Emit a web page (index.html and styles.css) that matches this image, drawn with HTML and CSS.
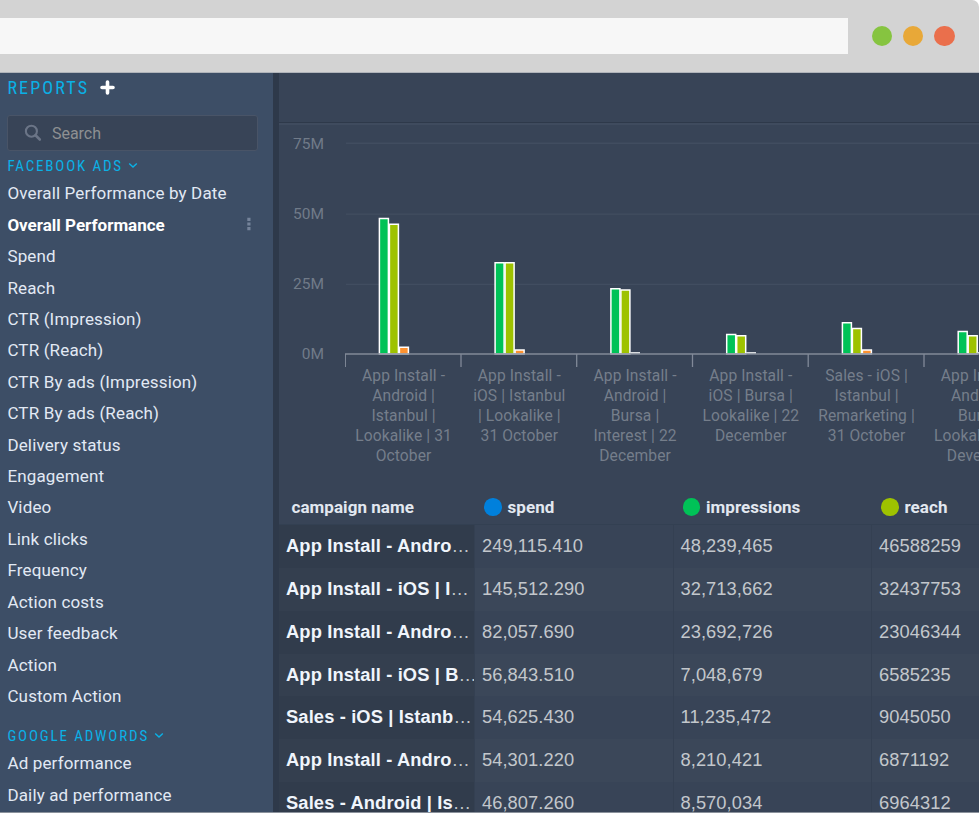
FILE: index.html
```html
<!DOCTYPE html>
<html lang="en">
<head>
<meta charset="utf-8">
<title>Reports</title>
<link rel="stylesheet" href="styles.css">
</head>
<body>
<div class="window">
  <header class="chrome">
    <div class="address"></div>
    <div class="lights"><i class="light green"></i><i class="light amber"></i><i class="light red"></i></div>
  </header>
  <div class="body">
    <aside class="sidebar">
      <h1 class="title"><span>REPORTS</span><svg width="15" height="15" viewBox="0 0 15 15"><path d="M7.5 2v11M2 7.5h11" stroke="#fff" stroke-width="3.6" stroke-linecap="round"/></svg></h1>
      <div class="search">
        <svg width="18" height="18" viewBox="0 0 18 18" fill="none" stroke="#6b7587"><circle cx="7.4" cy="7.2" r="5.5" stroke-width="2.1"/><path d="M11.5 11.3l4.3 4.2" stroke-width="2.6" stroke-linecap="round"/></svg>
        <span>Search</span>
      </div>
      <h2 class="group fb"><span>FACEBOOK ADS</span><svg width="10" height="7" viewBox="0 0 10 7"><path d="M1.2 1.4L5 5.1l3.8-3.7" fill="none" stroke="#0ab1e6" stroke-width="1.4"/></svg></h2>
      <ul class="links">
        <li>Overall Performance by Date</li>
        <li class="active"><span>Overall Performance</span><svg class="more" width="4" height="14" viewBox="0 0 4 14" fill="#75839a"><path d="M.3.8h3.2V4H.3zM.3 5.4h3.2v3.2H.3zM.3 10h3.2v3.2H.3z"/></svg></li>
        <li>Spend</li>
        <li>Reach</li>
        <li>CTR (Impression)</li>
        <li>CTR (Reach)</li>
        <li>CTR By ads (Impression)</li>
        <li>CTR By ads (Reach)</li>
        <li>Delivery status</li>
        <li>Engagement</li>
        <li>Video</li>
        <li>Link clicks</li>
        <li>Frequency</li>
        <li>Action costs</li>
        <li>User feedback</li>
        <li>Action</li>
        <li>Custom Action</li>
      </ul>
      <h2 class="group ga"><span>GOOGLE ADWORDS</span><svg width="10" height="7" viewBox="0 0 10 7"><path d="M1.2 1.4L5 5.1l3.8-3.7" fill="none" stroke="#0ab1e6" stroke-width="1.4"/></svg></h2>
      <ul class="links">
        <li>Ad performance</li>
        <li>Daily ad performance</li>
      </ul>
    </aside>
    <main class="main">
      <div class="toolbar"></div>
      <section class="chart">
        <div class="axis"><span>75M</span><span>50M</span><span>25M</span><span>0M</span></div>
        <div class="plot">
          <svg width="634" height="246" viewBox="345 122 634 246">
            <g fill="#414d60"><path d="M346 142.5h633v1.6H346zM346 213.5h633v1.3H346zM346 283.7h633v1.3H346z"/></g>
            <g stroke="#fff" stroke-width="1.5">
              <g fill="#00c257"><path d="M379.4 354V218.6h9V354zM495.1 354V262.7h9V354zM610.9 354V288.8h9V354zM726.7 354V334.4h9V354zM842.4 354V322.8h9V354zM958.2 354V331.5h9V354z"/></g>
              <g fill="#9ec200"><path d="M389.4 354V224.3h9V354zM505.1 354V262.8h9V354zM620.9 354V290.1h9V354zM736.7 354V335.7h9V354zM852.4 354V328.6h9V354zM968.2 354V335.7h9V354z"/></g>
              <g fill="#fd9230"><path d="M399.4 354V347.2h9V354zM515.1 354V350h9V354zM862.4 354V350h9V354z"/></g>
            </g>
            <path d="M630 352h10v2h-10zM746 352h10v2h-10zM977 352h2v2h-2z" fill="#d9dcdf"/>
            <path d="M345 354H979M345.3 353.5V367M461 353.5V367M576.7 353.5V367M692.5 353.5V367M808.2 353.5V367M924 353.5V367" stroke="#818998" stroke-width="1.3" fill="none"/>
          </svg>
          <div class="labels">
            <p>App Install -<br>Android |<br>Istanbul |<br>Lookalike | 31<br>October</p>
            <p>App Install -<br>iOS | Istanbul<br>| Lookalike |<br>31 October</p>
            <p>App Install -<br>Android |<br>Bursa |<br>Interest | 22<br>December</p>
            <p>App Install -<br>iOS | Bursa |<br>Lookalike | 22<br>December</p>
            <p>Sales - iOS |<br>Istanbul |<br>Remarketing |<br>31 October</p>
            <p>App Install -<br>Android |<br>Bursa |<br>Lookalike | 31<br>Devember</p>
          </div>
        </div>
      </section>
      <section class="table">
        <div class="row head"><div>campaign name</div><div><i class="dot blue"></i>spend</div><div><i class="dot grn"></i>impressions</div><div><i class="dot lime"></i>reach</div></div>
        <div class="row"><div><b>App Install - Andro</b>…</div><div>249,115.410</div><div>48,239,465</div><div>46588259</div></div>
        <div class="row"><div><b>App Install - iOS | I</b>…</div><div>145,512.290</div><div>32,713,662</div><div>32437753</div></div>
        <div class="row"><div><b>App Install - Andro</b>…</div><div>82,057.690</div><div>23,692,726</div><div>23046344</div></div>
        <div class="row"><div><b>App Install - iOS | B</b>…</div><div>56,843.510</div><div>7,048,679</div><div>6585235</div></div>
        <div class="row"><div><b>Sales - iOS | Istanb</b>…</div><div>54,625.430</div><div>11,235,472</div><div>9045050</div></div>
        <div class="row"><div><b>App Install - Andro</b>…</div><div>54,301.220</div><div>8,210,421</div><div>6871192</div></div>
        <div class="row"><div><b>Sales - Android | Is</b>…</div><div>46,807.260</div><div>8,570,034</div><div>6964312</div></div>
      </section>
    </main>
  </div>
</div>
</body>
</html>
```
FILE: styles.css
```css
* { box-sizing: border-box; }
body { margin: 0; background: #fff; overflow: hidden; font-family: Roboto, "Liberation Sans", sans-serif; }
h1, h2, p, ul { margin: 0; padding: 0; font-weight: 400; }
ul { list-style: none; }
.window { width: 979px; height: 813px; display: flex; flex-direction: column; border-radius: 0 7px 0 0; overflow: hidden; }
.chrome { height: 73px; flex: none; background: #d3d3d3; border-bottom: 1px solid #b0b4ba; display: flex; align-items: center; }
.address { width: 848px; height: 36px; background: #f7f7f7; }
.lights { display: flex; gap: 10.6px; margin-left: 23.7px; }
.light { width: 20.6px; height: 20.6px; border-radius: 50%; }
.green { background: #86c440; }
.amber { background: #e8a838; }
.red { background: #ea6f4c; }
.body { flex: 1; min-height: 0; display: flex; border-bottom: 1px solid #8b929c; overflow: hidden; }

.sidebar { width: 279px; flex: none; background: #3d4e66; border-right: 6px solid #2e394a; padding-left: 7.4px; }
.title { height: 28px; display: flex; align-items: center; gap: 10.5px; color: #0ab1e6; font-size: 18px; letter-spacing: 2.15px; }
.title span, .group span { font-stretch: 75%; }
.search { width: 251px; height: 36px; margin-top: 14px; background: #384457; border: 1.5px solid #495467; border-radius: 3px; display: flex; align-items: center; padding-left: 15.5px; color: #8e9092; font-size: 16px; letter-spacing: 0; }
.search span { margin-left: 10px; padding-top: 1px; }
.group { display: flex; align-items: center; color: #0ab1e6; font-size: 15px; letter-spacing: 1.85px; height: 27px; gap: 5px; }
.fb { margin-top: 1px; }
.ga { margin-top: 10.6px; height: 26px; }
.links { margin-top: -.6px; }
.links li { height: 31.42px; line-height: 31.42px; font-size: 17px; color: #e2e9f4; letter-spacing: .15px; white-space: nowrap; display: flex; align-items: center; }
.links .active { font-weight: 700; color: #fff; letter-spacing: 0; }
.more { margin: -3px 22.5px 0 auto; }

.main { flex: 1; min-width: 0; background: #384457; overflow: hidden; }
.toolbar { height: 50px; border-bottom: 1.5px solid #2e394a; box-shadow: 0 2px 0 #3f4b5e; }
.chart { height: 367px; display: flex; }
.axis { width: 66px; flex: none; padding: 11px 21px 0 0; text-align: right; color: #717b89; font-size: 15.5px; }
.axis span { display: block; height: 70px; line-height: 20px; }
.plot { flex: 1; min-width: 0; margin-top: -1px; }
.plot svg { display: block; }
.labels { width: 695px; display: grid; grid-template-columns: repeat(6, 115.75px); margin: -2px 0 0 .7px; text-align: center; font-size: 15.6px; line-height: 20px; color: #757e8b; letter-spacing: .1px; }
.labels p { white-space: nowrap; }

.table { width: 792px; font-family: "Liberation Sans", sans-serif; font-size: 18.3px; color: #c3c7cc; }
.row { display: grid; grid-template-columns: 195px 198.5px 198.5px 200px; height: 42.85px; line-height: 42px; }
.row > div { padding-left: 7px; white-space: nowrap; overflow: hidden; border-left: 1px solid #344052; letter-spacing: .07px; }
.row > div:first-child { padding-left: 7px; border: 0; background: #313c4c; letter-spacing: .14px; }
.row:nth-child(odd) > div { background: #3b4759; }
.row:nth-child(odd) > div:first-child { background: #343f4f; }
.row b { color: #f0f5fc; }
.head { font: 700 17px Roboto, sans-serif; height: 35px; line-height: 35px; color: #e2e8f0; border-bottom: 1.5px solid #334052; }
.table .head > div, .table .head > div:first-child { background: none; border: 0; display: flex; align-items: center; padding-left: 10px; letter-spacing: .05px; }
.table .head > div:first-child { padding-left: 12.5px; }
.dot { width: 17.5px; height: 17.5px; border-radius: 50%; margin-right: 6px; }
.blue { background: #0080dc; }
.grn { background: #00c257; }
.lime { background: #9ec200; }
```
